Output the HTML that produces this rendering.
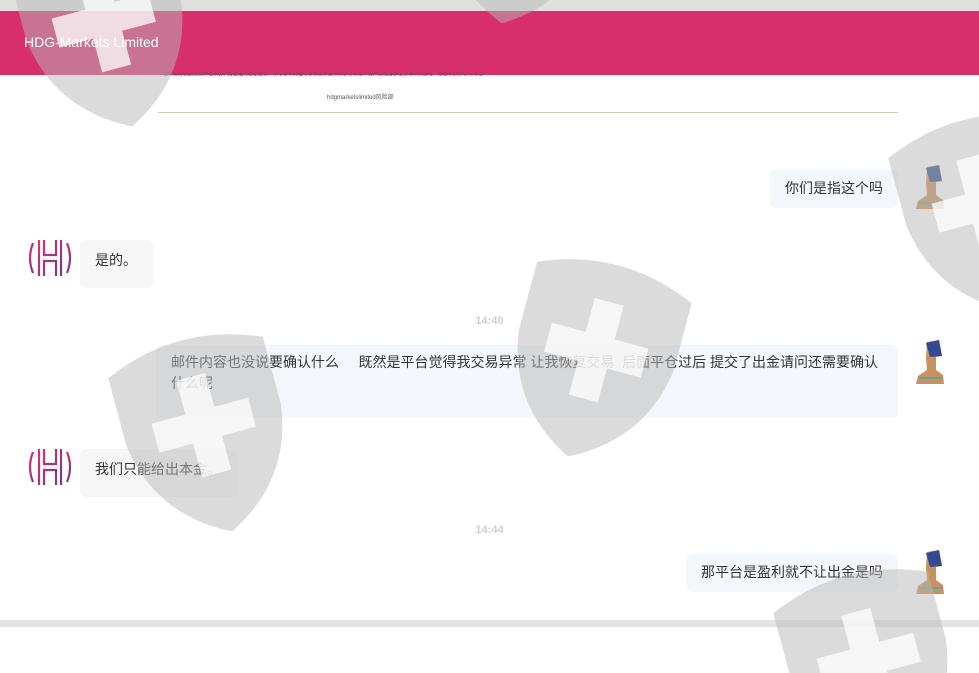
<!DOCTYPE html>
<html><head><meta charset="utf-8"><style>
*{margin:0;padding:0;box-sizing:border-box}
html,body{width:979px;height:673px;overflow:hidden}
body{background:#fff;position:relative;font-family:"Liberation Sans","Noto Sans CJK SC",sans-serif;color:#333}
.abs{position:absolute}
.bub{position:absolute;font-size:14px;line-height:21px;padding:8px 15px;border-radius:6px;white-space:nowrap}
.r{background:#f3f7fb}
.l{background:#f6f6f6}
.time{position:absolute;left:0;width:979px;text-align:center;font-size:11px;font-weight:bold;color:#cfcfcf}
</style></head><body>
<div class="abs" style="left:0;top:0;width:979px;height:11px;background:#e0e0e0"></div>
<div class="abs" style="left:0;top:11px;width:979px;height:64px;background:#d72f6b"></div>
<div class="abs" style="left:163px;top:72px;width:340px;height:4px;overflow:hidden;font-size:5px;color:#555;white-space:nowrap">请您在收到邮件后尽快与我们联系确认相关事宜，如未能及时确认可能会影响您的账户使用，我们会继续跟进处理您的申请，谢谢您的配合与理解。</div>
<div class="abs" style="left:327px;top:92px;font-size:6px;color:#555">hdgmarketslimited风险部</div>
<div class="abs" style="left:158px;top:112px;width:740px;height:1px;background:#c9d4a6"></div>

<div class="bub r" style="left:770px;top:170px;height:38px;width:128px">你们是指这个吗</div>
<div class="bub l" style="left:80px;top:240px;height:48px;width:73px;padding-top:10px">是的。</div>
<div class="time" style="top:315px">14:40</div>
<div class="bub r" style="left:156px;top:345px;width:742px;height:73px;padding-top:7px;white-space:normal">邮件内容也没说要确认什么&nbsp;&nbsp;&nbsp;&nbsp;&nbsp;既然是平台觉得我交易异常 让我恢复交易&nbsp;&nbsp;后面平仓过后 提交了出金请问还需要确认什么呢</div>
<div class="bub l" style="left:80px;top:449px;height:48px;width:157px;padding-top:10px">我们只能给出本金。</div>
<div class="time" style="top:524px">14:44</div>
<div class="bub r" style="left:686px;top:554px;height:38px;width:212px">那平台是盈利就不让出金是吗</div>

<svg class="abs" style="left:0;top:0;overflow:hidden" width="979" height="673" viewBox="0 0 979 673">
<defs>
<linearGradient id="hg" x1="0" y1="0" x2="1" y2="1"><stop offset="0" stop-color="#e0306e"/><stop offset="1" stop-color="#6c3a8e"/></linearGradient>
<g id="bust"><path d="M12,2 L24,0 L27,16 L21,17 L21,30 L28,35 L29,44 L1,44 L3,36 L12,30 L11,18 Z" fill="#c9915d"/><path d="M11,3 L24,0 L27,16 L15,17 L13,10 Z" fill="#34498f"/><rect x="4" y="37" width="23" height="2" fill="#5aa6a6"/></g>
<g id="hdg"><circle cx="23" cy="23" r="22" fill="#fff"/><g fill="none" stroke="url(#hg)" stroke-width="2.2"><path d="M6,8 Q0,23 6,38"/><path d="M40,8 Q46,23 40,38"/><path d="M12,5 V41 M34,5 V41 M17,5 V20 H29 V5 M17,41 V26 H29 V41"/></g></g>
<g id="sh"><path d="M0,25 Q80,-10 160,25 L160,95 Q150,170 80,205 Q10,170 0,95 Z" fill="#b8b8b8" fill-opacity="0.5"/><path d="M65,45 h30 v35 h35 v30 h-35 v35 h-30 v-35 h-35 v-30 h35 z" fill="#fff" fill-opacity="0.75"/></g>
</defs>
<use href="#bust" x="915" y="165"/>
<use href="#bust" x="915" y="340"/>
<use href="#bust" x="915" y="550"/>
<use href="#hdg" x="27" y="235"/>
<use href="#hdg" x="27" y="444"/>
<rect x="0" y="620" width="979" height="7" fill="#e5e5e5"/>
<g transform="translate(25,-75) rotate(-15 80 100)"><use href="#sh"/></g>
<g transform="translate(515,255) rotate(15 80 100)"><use href="#sh"/></g>
<g transform="translate(125,330) rotate(-15 80 100)"><use href="#sh"/></g>
<g transform="translate(905,110) rotate(-15 80 100)"><use href="#sh"/></g>
<g transform="translate(790,565) rotate(-15 80 100)"><use href="#sh"/></g>
<g transform="translate(440,-180) rotate(10 80 100)"><use href="#sh"/></g>
</svg>
<div class="abs" style="left:24px;top:34px;font-size:14px;color:#fff">HDG-Markets Limited</div>
</body></html>
